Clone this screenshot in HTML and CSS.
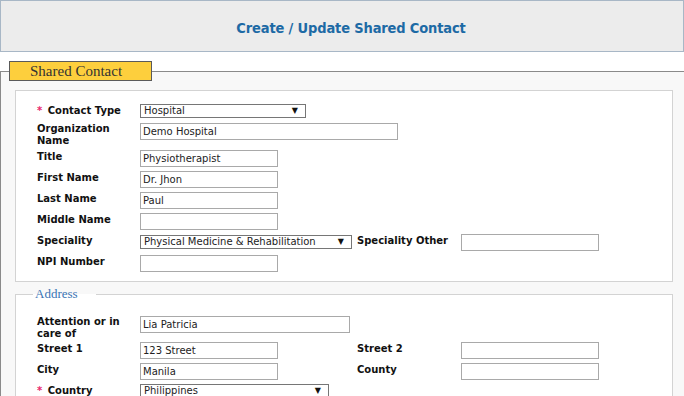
FILE: index.html
```html
<!DOCTYPE html>
<html lang="en">
<head>
  <meta charset="UTF-8" />
  <title>Create / Update Shared Contact</title>
  <link rel="stylesheet" href="styles.css">
</head>
<body>

  <!-- Page header -->
  <div class="page-header">
    <h1>Create / Update Shared Contact</h1>
  </div>

  <fieldset class="main-set">
    <legend class="main-legend">Shared Contact</legend>

    <!-- Contact details -->
    <div class="box">
      <div class="form-grid">
        <label class="lbl first"><span class="req">*</span> Contact Type</label>
        <div class="cell span-3">
          <div class="select w-type"><span>Hospital</span><span class="arrow">&#9660;</span></div>
        </div>

        <label class="lbl lbl-2">Organization Name</label>
        <div class="cell span-3"><input type="text" class="w-long" value="Demo Hospital"></div>

        <label class="lbl">Title</label>
        <div class="cell span-3"><input type="text" value="Physiotherapist"></div>

        <label class="lbl">First Name</label>
        <div class="cell span-3"><input type="text" value="Dr. Jhon"></div>

        <label class="lbl">Last Name</label>
        <div class="cell span-3"><input type="text" value="Paul"></div>

        <label class="lbl">Middle Name</label>
        <div class="cell span-3"><input type="text" value=""></div>

        <label class="lbl">Speciality</label>
        <div class="cell">
          <div class="select w-spec low"><span>Physical Medicine &amp; Rehabilitation</span><span class="arrow">&#9660;</span></div>
        </div>
        <label class="lbl">Speciality Other</label>
        <div class="cell"><input type="text" value=""></div>

        <label class="lbl">NPI Number</label>
        <div class="cell span-3"><input type="text" value=""></div>
      </div>
    </div>

    <!-- Address -->
    <fieldset class="box sub-set">
      <legend class="sub-legend">Address</legend>
      <div class="form-grid">
        <label class="lbl lbl-2 tight">Attention or in care of</label>
        <div class="cell span-3"><input type="text" class="w-mid" value="Lia Patricia"></div>

        <label class="lbl">Street 1</label>
        <div class="cell"><input type="text" value="123 Street"></div>
        <label class="lbl">Street 2</label>
        <div class="cell"><input type="text" value=""></div>

        <label class="lbl">City</label>
        <div class="cell"><input type="text" value="Manila"></div>
        <label class="lbl">County</label>
        <div class="cell"><input type="text" value=""></div>

        <label class="lbl"><span class="req">*</span> Country</label>
        <div class="cell span-3">
          <div class="select w-country"><span>Philippines</span><span class="arrow">&#9660;</span></div>
        </div>
      </div>
    </fieldset>
  </fieldset>

</body>
</html>
```

FILE: styles.css
```css
* { box-sizing: border-box; }

body {
  margin: 0;
  font-family: "DejaVu Sans", Verdana, sans-serif;
  background: #fff;
  color: #111;
  overflow: hidden;
}

/* header */
.page-header {
  height: 52px;
  background: #ececec;
  border: 1px solid #a8b7c6;
  display: flex;
  align-items: center;
  justify-content: center;
  padding: 4px 0 0 18px;
}

.page-header h1 {
  margin: 0;
  font-family: "DejaVu Sans Condensed", "DejaVu Sans", sans-serif;
  font-stretch: condensed;
  font-size: 14.5px;
  letter-spacing: -0.15px;
  font-weight: bold;
  color: #1d6aa5;
}

/* outer fieldset */
.main-set {
  margin: 9px 0 0 0;
  padding: 9px 11px 0 14px;
  border: 1px solid #8a8a8a;
  border-right: 0;
  border-bottom: 0;
  background: #f8f8f8;
  min-width: 0;
}

.main-legend {
  margin-left: -6px;
  width: 143px;
  height: 20px;
  padding: 0 0 0 20px;
  background: #fdcf3d;
  border: 1px solid #5a5a5a;
  font-family: "Liberation Serif", serif;
  font-size: 15px;
  line-height: 18px;
  color: #333;
}

/* white boxes */
.box {
  background: #fff;
  border: 1px solid #d3d3d3;
  padding: 13px 10px 9px 21px;
}

.sub-set {
  margin: 4px 0 0 0;
  padding-top: 14px;
  min-width: 0;
}

.sub-legend {
  margin-left: -4px;
  padding: 0 18px 0 2px;
  font-family: "Liberation Serif", serif;
  font-size: 13px;
  line-height: 16px;
  color: #3a74b4;
}

/* form grid */
.form-grid {
  display: grid;
  grid-template-columns: 103px 217px 104px 1fr;
  row-gap: 4px;
  align-items: start;
}

.span-3 { grid-column: span 3; }

.lbl {
  font-size: 10px;
  font-weight: bold;
  line-height: 12px;
  padding-top: 1px;
  color: #111;
}

.lbl.first { height: 15px; }
.lbl-2 { padding-top: 0; height: 23px; }
.lbl.tight { height: 22px; }

.req {
  color: #e8266b;
  margin-right: 2px;
}

.cell {
  display: flex;
}

input[type="text"] {
  width: 138px;
  height: 17px;
  margin: 0;
  padding: 0 2px;
  border: 1px solid #a9a9a9;
  font-family: "DejaVu Sans", Verdana, sans-serif;
  font-size: 10px;
  color: #222;
  background: #fff;
}

input.w-long { width: 258px; }
input.w-mid { width: 210px; }

/* fake dropdowns */
.select {
  display: flex;
  justify-content: space-between;
  align-items: center;
  height: 14px;
  padding: 0 7px 0 3px;
  border: 1px solid #767676;
  background: #fff;
  font-size: 10px;
  line-height: 12px;
  color: #222;
}

.select.low { margin-top: 1px; }

.select .arrow {
  font-size: 8px;
  color: #111;
}

.w-type { width: 166px; }
.w-spec { width: 212px; }
.w-country { width: 189px; }
```
